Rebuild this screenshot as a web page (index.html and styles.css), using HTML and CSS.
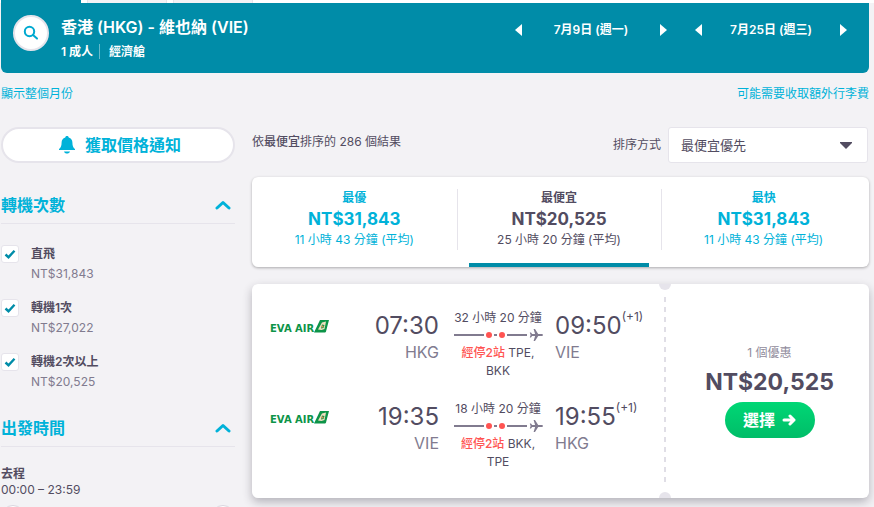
FILE: index.html
```html
<!DOCTYPE html>
<html lang="zh-Hant">
<head>
  <meta charset="UTF-8">
  <meta name="viewport" content="width=device-width, initial-scale=1.0">
  <title>香港 (HKG) - 維也納 (VIE)</title>
  <link rel="stylesheet" href="styles.css">
</head>
<body>
  <div class="product-tabs">
    <span class="product-tab active"></span>
    <span class="product-tab"></span>
    <span class="product-tab"></span>
  </div>

  <header class="search-bar">
    <button class="search-btn" aria-label="搜尋">
      <svg width="16" height="16" viewBox="0 0 16 16" fill="none" stroke="#00a9d0" stroke-width="2" stroke-linecap="round">
        <circle cx="6.5" cy="6.5" r="4.7"/>
        <path d="M10 10l4 3.6"/>
      </svg>
    </button>
    <div class="search-info">
      <h1>香港 (HKG) - 維也納 (VIE)</h1>
      <p><span>1 成人</span><span class="cabin">經濟艙</span></p>
    </div>
    <div class="dates">
      <div class="date">
        <button class="arrow prev" aria-label="前一天"></button>
        <span>7月9日 (週一)</span>
        <button class="arrow next" aria-label="後一天"></button>
      </div>
      <div class="date">
        <button class="arrow prev" aria-label="前一天"></button>
        <span>7月25日 (週三)</span>
        <button class="arrow next" aria-label="後一天"></button>
      </div>
    </div>
  </header>

  <div class="links">
    <a href="#">顯示整個月份</a>
    <a href="#">可能需要收取額外行李費</a>
  </div>

  <div class="content">
    <aside class="filters">
      <button class="alert-btn">
        <svg width="16" height="18" viewBox="0 0 16 18" fill="#00b2d9">
          <path d="M8 0C6.9 0 6.4.6 6.3 1.4 3.8 2.1 2.6 4 2.6 6.5c0 3.600-.8 5-2.600 6.600V14h16v-.9c-1.800-1.600-2.600-3-2.600-6.600 0-2.500-1.200-4.400-3.700-5.100C9.600.6 9.100 0 8 0zM5 15.500h6c-.5 1.400-1.600 2.100-3 2.100s-2.500-.7-3-2.100z"/>
        </svg>
        獲取價格通知
      </button>

      <section class="filter">
        <button class="filter-title">
          轉機次數
          <svg width="16" height="10" viewBox="0 0 16 10" fill="none" stroke="#00b2d9" stroke-width="3" stroke-linecap="round" stroke-linejoin="round"><path d="M2 8l6-5.500L14 8"/></svg>
        </button>
        <div class="stops">
          <label class="stop">
            <input type="checkbox" checked>
            <span class="stop-name">直飛</span>
            <span class="stop-price">NT$31,843</span>
          </label>
          <label class="stop">
            <input type="checkbox" checked>
            <span class="stop-name">轉機1次</span>
            <span class="stop-price">NT$27,022</span>
          </label>
          <label class="stop">
            <input type="checkbox" checked>
            <span class="stop-name">轉機2次以上</span>
            <span class="stop-price">NT$20,525</span>
          </label>
        </div>
      </section>

      <section class="filter">
        <button class="filter-title">
          出發時間
          <svg width="16" height="10" viewBox="0 0 16 10" fill="none" stroke="#00b2d9" stroke-width="3" stroke-linecap="round" stroke-linejoin="round"><path d="M2 8l6-5.500L14 8"/></svg>
        </button>
        <div class="times">
          <strong>去程</strong>
          <span>00:00 – 23:59</span>
          <div class="range">
            <input type="range" min="0" max="24" value="0" aria-label="最早出發時間">
            <input type="range" min="0" max="24" value="24" aria-label="最晚出發時間">
          </div>
        </div>
      </section>
    </aside>

    <main class="results">
      <div class="results-head">
        <p>依<b>最便宜</b>排序的 286 個結果</p>
        <div class="sort">
          <label for="sort">排序方式</label>
          <select id="sort">
            <option>最便宜優先</option>
            <option>最優優先</option>
            <option>最快優先</option>
          </select>
        </div>
      </div>

      <div class="sort-tabs">
        <button class="sort-tab">
          <b>最優</b>
          <strong>NT$31,843</strong>
          <span>11 小時 43 分鐘 (平均)</span>
        </button>
        <button class="sort-tab selected">
          <b>最便宜</b>
          <strong>NT$20,525</strong>
          <span>25 小時 20 分鐘 (平均)</span>
        </button>
        <button class="sort-tab">
          <b>最快</b>
          <strong>NT$31,843</strong>
          <span>11 小時 43 分鐘 (平均)</span>
        </button>
      </div>

      <article class="ticket">
        <div class="legs">
          <div class="leg">
            <div class="airline">
              <span>EVA AIR</span>
              <svg width="15" height="13" viewBox="0 0 15 13">
                <path d="M6 0h9l-3 11.500c-.2.900-.7 1-1.500 1H0z" fill="#0d9448"/>
                <path d="M8 2.500l4-1-1.500 7.500-3 1-3.500-.5z" fill="#f0dfc0"/>
                <path d="M8 4.500l2.500.5-1 3-2.500.5z" fill="#0d9448"/>
                <circle cx="8.500" cy="6.500" r="1" fill="#e98a4a"/>
              </svg>
            </div>
            <div class="point from">
              <span class="time">07:30</span>
              <span class="code">HKG</span>
            </div>
            <div class="route">
              <span>32 小時 20 分鐘</span>
              <svg class="route-line" width="90" height="14" viewBox="0 0 90 14">
                <path d="M1 7h30M41 7h3M54 7h20" stroke="#817b8f" stroke-width="2"/>
                <circle cx="36" cy="7" r="3" fill="#ff5452"/>
                <circle cx="49" cy="7" r="3" fill="#ff5452"/>
                <path d="M90 7c0-.7-.8-1-1.600-1h-3.200L82 1h-1.400l1.500 5h-3L78 4.500h-1.200l.8 2.500-.8 2.500H78L79.100 8h3l-1.500 5H82l3.200-5h3.200c.8 0 1.600-.3 1.600-1z" fill="#817b8f"/>
              </svg>
              <span class="via"><em>經停2站</em> TPE, BKK</span>
            </div>
            <div class="point to">
              <span class="time">09:50<sup>(+1)</sup></span>
              <span class="code">VIE</span>
            </div>
          </div>

          <div class="leg">
            <div class="airline">
              <span>EVA AIR</span>
              <svg width="15" height="13" viewBox="0 0 15 13">
                <path d="M6 0h9l-3 11.500c-.2.900-.7 1-1.500 1H0z" fill="#0d9448"/>
                <path d="M8 2.500l4-1-1.500 7.500-3 1-3.500-.5z" fill="#f0dfc0"/>
                <path d="M8 4.500l2.500.5-1 3-2.500.5z" fill="#0d9448"/>
                <circle cx="8.500" cy="6.500" r="1" fill="#e98a4a"/>
              </svg>
            </div>
            <div class="point from">
              <span class="time">19:35</span>
              <span class="code">VIE</span>
            </div>
            <div class="route">
              <span>18 小時 20 分鐘</span>
              <svg class="route-line" width="90" height="14" viewBox="0 0 90 14">
                <path d="M1 7h30M41 7h3M54 7h20" stroke="#817b8f" stroke-width="2"/>
                <circle cx="36" cy="7" r="3" fill="#ff5452"/>
                <circle cx="49" cy="7" r="3" fill="#ff5452"/>
                <path d="M90 7c0-.7-.8-1-1.600-1h-3.200L82 1h-1.400l1.500 5h-3L78 4.500h-1.200l.8 2.500-.8 2.500H78L79.100 8h3l-1.500 5H82l3.200-5h3.200c.8 0 1.600-.3 1.600-1z" fill="#817b8f"/>
              </svg>
              <span class="via"><em>經停2站</em> BKK, TPE</span>
            </div>
            <div class="point to">
              <span class="time">19:55<sup>(+1)</sup></span>
              <span class="code">HKG</span>
            </div>
          </div>
        </div>

        <div class="offer">
          <span class="deals">1 個優惠</span>
          <span class="price">NT$20,525</span>
          <button class="select-btn">
            選擇
            <svg width="14" height="12" viewBox="0 0 14 12" fill="none" stroke="#fff" stroke-width="3" stroke-linecap="round" stroke-linejoin="round"><path d="M2 6h10M8 2l4 4-4 4"/></svg>
          </button>
        </div>
      </article>
    </main>
  </div>
</body>
</html>
```

FILE: styles.css
```css
* {
  box-sizing: border-box;
}
body {
  margin: 0;
  height: 100vh;
  overflow: hidden;
  font-family: Inter, "Noto Sans CJK TC", sans-serif;
  font-size: 12px;
  line-height: 18px;
  color: #524c61;
  background-color: #f3f2f5;
}
h1, p {
  margin: 0;
}
button {
  padding: 0;
  border: none;
  background: none;
  font: inherit;
  color: inherit;
  cursor: pointer;
}
a {
  color: #00b2d9;
  text-decoration: none;
}

/* header */
.product-tabs {
  display: flex;
  gap: 6px;
  height: 3px;
  padding-left: 1px;
  background: #fff;
}
.product-tab {
  width: 80px;
  background: #f3f2f5;
  border: solid #e6e4eb;
  border-width: 0 1px;
}
.product-tab.active {
  background: #008ca8;
  border: none;
}
.search-bar {
  display: flex;
  align-items: flex-start;
  height: 70px;
  margin: 0 5px 0 1px;
  padding: 12px 8px 0 12px;
  background: #008ca8;
  border-radius: 0 0 6px 6px;
  color: #fff;
  font-weight: 600;
}
.search-btn {
  display: flex;
  align-items: center;
  justify-content: center;
  width: 36px;
  height: 36px;
  background: #fff;
  border: 2px solid #e6e4eb;
  border-radius: 50%;
}
.search-info {
  flex: 1;
  padding-left: 12px;
}
.search-info h1 {
  margin-bottom: 4px;
  font-size: 16px;
  font-weight: 600;
  line-height: 24px;
}
.search-info .cabin {
  margin-left: 6px;
  padding-left: 9px;
  border-left: 1px solid #66bacb;
}
.dates {
  display: flex;
}
.date {
  display: flex;
  align-items: center;
  justify-content: space-between;
  width: 180px;
  height: 30px;
  padding: 0 14px;
}
.arrow {
  width: 7px;
  height: 12px;
  background: #fff;
}
.arrow.prev {
  clip-path: polygon(100% 0, 100% 100%, 0 50%);
}
.arrow.next {
  clip-path: polygon(0 0, 100% 50%, 0 100%);
}
.links {
  display: flex;
  justify-content: space-between;
  padding: 12px 5px 0 1px;
}

.content {
  display: grid;
  grid-template-columns: 234px 1fr;
  gap: 17px;
  padding: 24px 5px 0 1px;
}

/* filters */
.alert-btn {
  display: flex;
  align-items: center;
  justify-content: center;
  gap: 10px;
  width: 100%;
  height: 36px;
  margin-bottom: 5px;
  padding-left: 4px;
  background: #fff;
  border: 2px solid #e6e4eb;
  border-radius: 18px;
  color: #00b2d9;
  font-size: 16px;
  font-weight: 600;
}
.filter {
  padding-top: 19px;
}
.filter-title {
  display: flex;
  align-items: center;
  justify-content: space-between;
  width: 100%;
  height: 37px;
  padding-right: 4px;
  border-bottom: 1px solid #e6e4eb;
  color: #00b2d9;
  font-size: 16px;
  font-weight: 600;
}
.stops {
  display: grid;
  gap: 15px;
  padding-top: 20px;
}
.stop {
  display: grid;
  grid-template-columns: 18px 1fr;
  column-gap: 12px;
  row-gap: 1px;
}
.stop input {
  appearance: none;
  width: 18px;
  height: 18px;
  margin: 1px 0;
  border: 1px solid #e6e4eb;
  border-radius: 3px;
  background-color: #fff;
}
.stop input:checked {
  background-image: url("data:image/svg+xml,%3Csvg xmlns='http://www.w3.org/2000/svg' width='16' height='16' fill='none' stroke='%23008ca8' stroke-width='2.400'%3E%3Cpath d='M3.500 8.500l3 2.700 6-6.400'/%3E%3C/svg%3E");
}
.stop-name {
  font-weight: 600;
  line-height: 20px;
}
.stop-price {
  grid-column: 2;
  color: #817b8f;
}
.times {
  display: grid;
  padding-top: 19px;
  line-height: 16px;
}
.times strong {
  font-weight: 600;
}
.range {
  display: grid;
  padding-top: 7px;
}
.range input {
  appearance: none;
  grid-area: 1 / 1;
  width: 100%;
  height: 24px;
  margin: 0;
  background: none;
  pointer-events: none;
}
.range input::-webkit-slider-thumb {
  appearance: none;
  width: 24px;
  height: 24px;
  background: #fff;
  border: 1px solid #d8d5de;
  border-radius: 50%;
  pointer-events: auto;
}

/* results */
.results-head {
  display: flex;
  justify-content: space-between;
  padding-right: 1px;
}
.results-head p {
  padding-top: 6px;
}
.results-head b {
  font-weight: 500;
}
.sort {
  display: flex;
  align-items: center;
  gap: 7px;
}
.sort select {
  appearance: none;
  width: 200px;
  height: 36px;
  padding: 0 12px;
  border: 1px solid #e6e4eb;
  border-radius: 3px;
  background: #fff url("data:image/svg+xml,%3Csvg xmlns='http://www.w3.org/2000/svg' width='12' height='7'%3E%3Cpath d='M0 0h12v1L6 7 0 1z' fill='%23524c61'/%3E%3C/svg%3E") no-repeat right 15px center;
  font: inherit;
  font-size: 13px;
  color: inherit;
}
.sort-tabs {
  display: grid;
  grid-template-columns: repeat(3, 1fr);
  margin-top: 14px;
  padding: 12px 3px 0 0;
  background: #fff;
  border-radius: 6px;
  box-shadow: 0 1px 3px rgba(0, 0, 0, 0.3);
}
.sort-tab {
  display: grid;
  justify-items: center;
  align-content: start;
  height: 78px;
  color: #00b2d9;
  background: linear-gradient(#e6e4eb, #e6e4eb) no-repeat left top / 1px 61px;
}
.sort-tab:first-child {
  background: none;
}
.sort-tab b {
  font-weight: 600;
}
.sort-tab strong {
  font-size: 17px;
  font-weight: 700;
  line-height: 24px;
}
.sort-tab.selected {
  color: #524c61;
}
.sort-tab.selected::after {
  content: "";
  justify-self: stretch;
  height: 4px;
  margin: 14px 12px 0;
  background: #008ca8;
}
.ticket {
  position: relative;
  display: grid;
  grid-template-columns: 1fr 205px;
  min-height: 214px;
  margin-top: 17px;
  background: #fff;
  border-radius: 6px;
  box-shadow: 0 4px 10px rgba(37, 32, 51, 0.3);
}
/* notches on the tear line */
.ticket::before, .ticket::after {
  content: "";
  position: absolute;
  right: 198px;
  width: 12px;
  height: 6px;
  background: #e6e4eb;
}
.ticket::before {
  top: 0;
  border-radius: 0 0 6px 6px;
}
.ticket::after {
  bottom: 0;
  border-radius: 6px 6px 0 0;
}
.legs {
  padding: 25px 18px 0;
}
.leg {
  display: grid;
  grid-template-columns: 62px 1fr 90px 103px;
  height: 91px;
}
.airline {
  display: flex;
  align-items: flex-end;
  height: 24px;
  color: #0d9448;
  font-family: "DejaVu Sans", sans-serif;
  font-size: 10px;
  font-weight: 700;
  line-height: 8px;
  white-space: nowrap;
}
.point {
  display: grid;
  align-content: start;
}
.from {
  justify-items: end;
  padding-right: 14px;
}
.to {
  padding-left: 12px;
}
.time {
  font-size: 24px;
  line-height: 34px;
  white-space: nowrap;
}
.time sup {
  font-size: 12px;
  line-height: 12px;
  vertical-align: 13px;
}
.code {
  color: #817b8f;
  font-size: 16px;
  line-height: 18px;
}
.route {
  display: grid;
  justify-items: center;
  align-content: start;
  text-align: center;
  white-space: nowrap;
}
.route-line {
  margin: 1px 0 2px;
}
.via {
  padding: 0 6px;
  white-space: normal;
}
.via em {
  color: #ff5452;
  font-style: normal;
  font-weight: 500;
}
.offer {
  display: flex;
  flex-direction: column;
  align-items: center;
  padding: 60px 0 0 6px;
  background: repeating-linear-gradient(#e0dee6 0 5px, transparent 5px 10px) no-repeat left 13px / 2px 186px;
}
.deals {
  color: #918c9c;
}
.price {
  font-size: 23px;
  font-weight: 700;
  line-height: 40px;
}
.select-btn {
  display: flex;
  align-items: center;
  justify-content: center;
  gap: 7px;
  width: 90px;
  height: 36px;
  background: linear-gradient(#00d775, #00bd68);
  border-radius: 18px;
  color: #fff;
  font-size: 16px;
  font-weight: 700;
}
```
